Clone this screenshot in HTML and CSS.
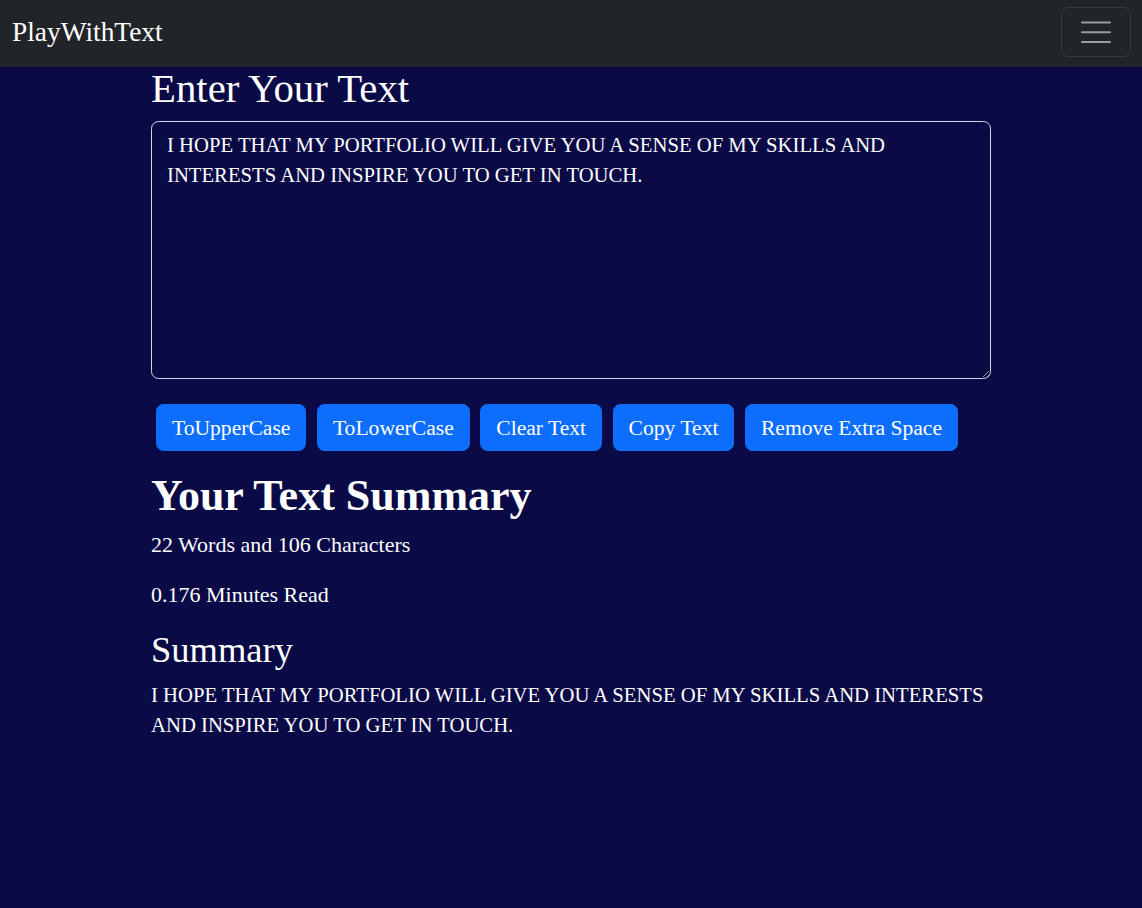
FILE: index.html
```html
<!DOCTYPE html>
<html lang="en">
<head>
<meta charset="utf-8">
<title>PlayWithText</title>
<link rel="stylesheet" href="styles.css">
</head>
<body>
<nav class="navbar">
  <a class="brand" href="#">PlayWithText</a>
  <button class="toggler" type="button" aria-label="Toggle navigation">
    <svg class="toggler-icon" width="30" height="30" viewBox="0 0 30 30" aria-hidden="true">
      <path d="M1 5.5h28M1 15.2h28M1 25h28" stroke="rgba(255,255,255,0.55)" stroke-width="2" stroke-linecap="round" fill="none"/>
    </svg>
  </button>
</nav>
<main class="container">
  <h1 class="title">Enter Your Text</h1>
  <textarea class="box" rows="8">I HOPE THAT MY PORTFOLIO WILL GIVE YOU A SENSE OF MY SKILLS AND INTERESTS AND INSPIRE YOU TO GET IN TOUCH.</textarea>
  <div class="actions">
    <button class="btn" type="button">ToUpperCase</button>
    <button class="btn" type="button">ToLowerCase</button>
    <button class="btn" type="button">Clear Text</button>
    <button class="btn" type="button">Copy Text</button>
    <button class="btn" type="button">Remove Extra Space</button>
  </div>
  <section class="summary">
    <h2 class="summary-title">Your Text Summary</h2>
    <p class="line stat">22 Words and 106 Characters</p>
    <p class="line stat">0.176 Minutes Read</p>
    <h3 class="preview-title">Summary</h3>
    <p class="line preview">I HOPE THAT MY PORTFOLIO WILL GIVE YOU A SENSE OF MY SKILLS AND INTERESTS AND INSPIRE YOU TO GET IN TOUCH.</p>
  </section>
</main>
</body>
</html>
```

FILE: styles.css
```css
html, body {
  margin: 0;
  padding: 0;
  background: #0a0a46;
  min-height: 100%;
}
body {
  font-family: "Liberation Serif", "Times New Roman", serif;
  font-size: 20px;
  line-height: 30px;
  color: #ffffff;
}
.navbar {
  height: 67px;
  background: #212529;
  display: flex;
  align-items: flex-start;
  justify-content: space-between;
  padding: 0 11px 0 12px;
  box-sizing: border-box;
}
.brand {
  color: #ffffff;
  text-decoration: none;
  font-size: 27.4px;
  line-height: 30px;
  margin-top: 17px;
}
.toggler {
  margin-top: 7px;
  width: 70px;
  height: 50px;
  background: transparent;
  border: 1px solid rgba(255,255,255,0.1);
  border-radius: 7.5px;
  display: flex;
  align-items: center;
  justify-content: center;
  padding: 0;
}
.container {
  width: 840px;
  margin: 0 auto;
}
.title {
  font-size: 40.8px;
  font-weight: 400;
  line-height: 42px;
  margin: 1px 0 11px;
}
.box {
  display: block;
  box-sizing: border-box;
  width: 840px;
  height: 258px;
  margin: 0;
  padding: 8px 15px;
  background: transparent;
  color: #ffffff;
  border: 1px solid #d4d6e0;
  border-radius: 7.5px;
  font-family: inherit;
  font-size: 20.7px;
  line-height: 30px;
  outline: none;
}
.actions {
  display: flex;
  gap: 10.5px;
  padding-left: 5px;
  margin-top: 25px;
}
.btn {
  font-family: inherit;
  font-size: 21.6px;
  line-height: 30px;
  color: #ffffff;
  background: #0d6efd;
  border: 1px solid #0d6efd;
  border-radius: 7.5px;
  padding: 7.5px 15px;
  height: 47px;
  cursor: pointer;
}
.summary {
  margin-top: 21px;
}
.summary-title {
  font-size: 44px;
  font-weight: 700;
  line-height: 48px;
  margin: 0 0 10px;
}
.line {
  margin: 0 0 20px;
}
.stat {
  font-size: 22px;
}
.preview {
  font-size: 20.7px;
  margin-top: -1px;
}
.preview-title {
  font-size: 36.5px;
  font-weight: 400;
  line-height: 42px;
  margin: -1px 0 10px;
}
```
